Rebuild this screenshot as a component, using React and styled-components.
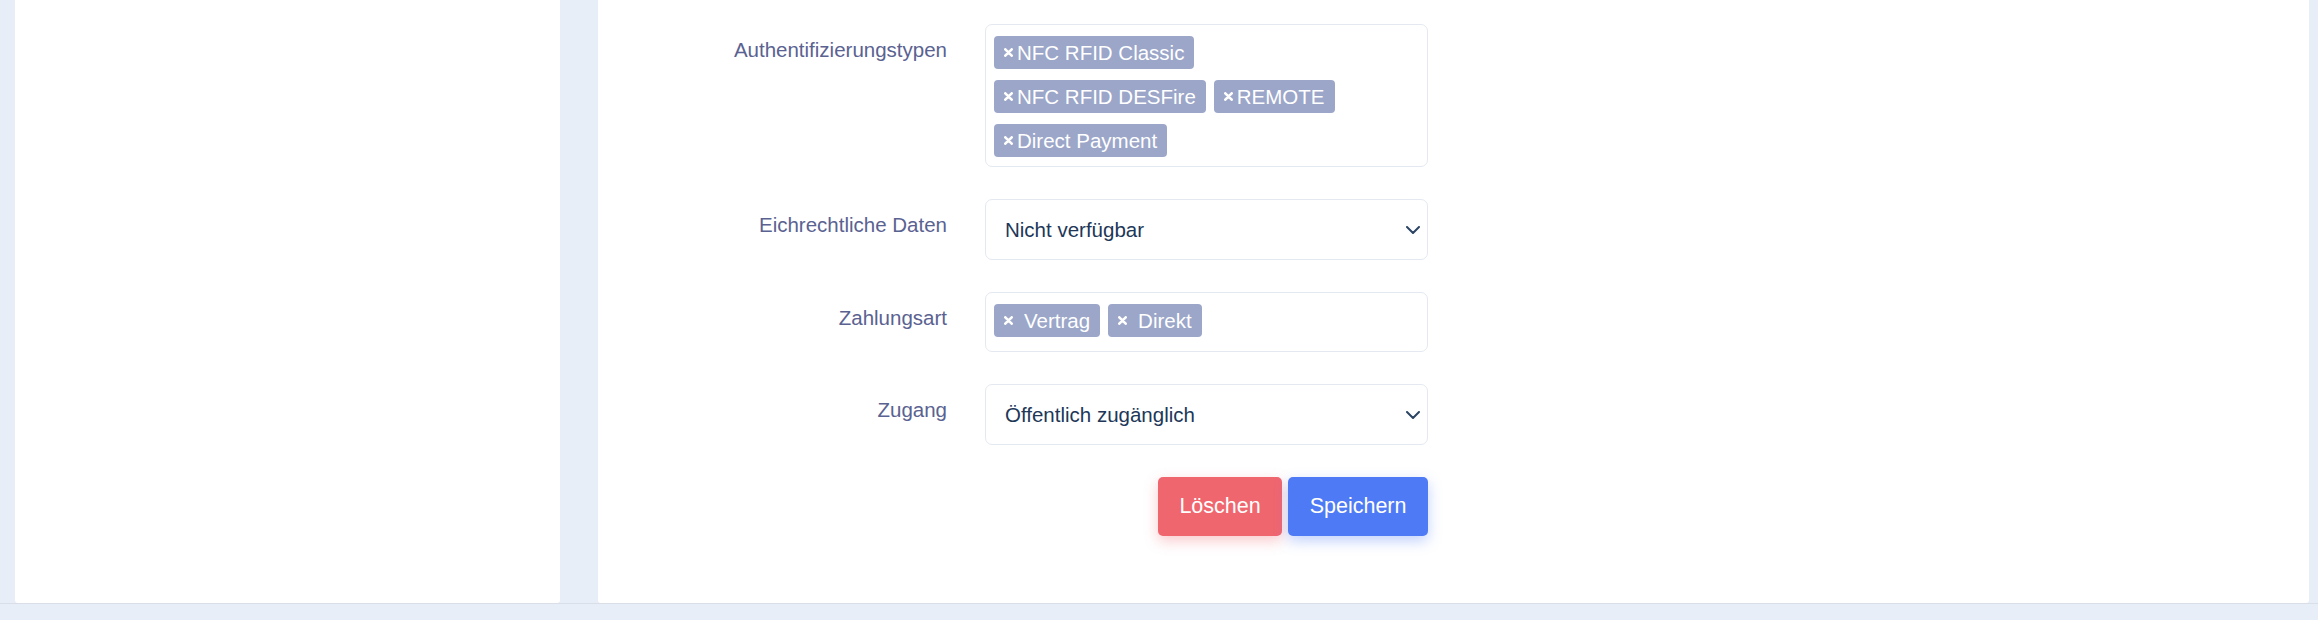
import React from "react";
import styled, { createGlobalStyle } from "styled-components";

const GlobalStyle = createGlobalStyle`
  html, body {
    margin: 0;
    padding: 0;
    background: #e8eef7;
    font-family: "Liberation Sans", Arial, sans-serif;
  }
`;

const Page = styled.div`
  height: 620px;
  display: flex;
  flex-direction: column;
  overflow: hidden;
`;

const Columns = styled.div`
  flex: 0 0 603px;
  display: flex;
  gap: 38px;
  padding: 0 9px 0 15px;
`;

const SidePanel = styled.div`
  width: 545px;
  background: #ffffff;
  border-radius: 0 0 3px 3px;
`;

const MainPanel = styled.div`
  flex: 1;
  background: #ffffff;
  border-radius: 0 0 3px 3px;
`;

const Footer = styled.div`
  flex: 1;
  border-top: 1px solid #d9dee7;
  background: #e8eef7;
`;

const Form = styled.div`
  display: grid;
  grid-template-columns: 349px 443px;
  column-gap: 38px;
  row-gap: 32px;
  padding-top: 24px;
`;

const Label = styled.div`
  text-align: right;
  padding-top: 10px;
  font-size: 20.5px;
  line-height: 31px;
  color: #5a6291;
`;

const TagBox = styled.div`
  box-sizing: border-box;
  min-height: 60px;
  border: 1px solid #e4e9f1;
  border-radius: 7px;
  padding: 11px 40px 9px 8px;
  display: flex;
  flex-wrap: wrap;
  align-content: flex-start;
  gap: 11px 8px;
`;

const Tag = styled.span`
  height: 33px;
  display: inline-flex;
  align-items: center;
  gap: ${(p) => p.$gap}px;
  padding: 0 10px;
  background: #9ba6c9;
  border-radius: 4px;
  color: #ffffff;
  font-size: 20.5px;
  white-space: nowrap;
`;

const Select = styled.div`
  box-sizing: border-box;
  height: 61px;
  border: 1px solid #e4e9f1;
  border-radius: 7px;
  padding: 0 7px 0 19px;
  display: flex;
  align-items: center;
  justify-content: space-between;
  color: #213758;
  font-size: 20.5px;
`;

const Actions = styled.div`
  grid-column: 2;
  display: flex;
  justify-content: flex-end;
  gap: 6px;
`;

const Button = styled.button`
  height: 59px;
  padding: 0 21.5px;
  border: none;
  border-radius: 5px;
  font-family: inherit;
  font-size: 21.5px;
  color: #ffffff;
  background: ${(p) => (p.$variant === "danger" ? "#f0666f" : "#4e7bf5")};
  box-shadow: 0 5px 14px
    ${(p) =>
      p.$variant === "danger"
        ? "rgba(240, 102, 111, 0.35)"
        : "rgba(78, 123, 245, 0.35)"};
`;

const Cross = () => (
  <svg width="9" height="9" viewBox="0 0 9 9">
    <path
      d="M1.3 1.3 L7.7 7.7 M7.7 1.3 L1.3 7.7"
      stroke="#ffffff"
      strokeWidth="2.6"
      strokeLinecap="round"
    />
  </svg>
);

const Chevron = () => (
  <svg width="14" height="8" viewBox="0 0 14 8" fill="none">
    <polyline
      points="1,1 7,7 13,1"
      stroke="#2c4565"
      strokeWidth="2"
      strokeLinecap="round"
      strokeLinejoin="round"
    />
  </svg>
);

const authTypes = [
  "NFC RFID Classic",
  "NFC RFID DESFire",
  "REMOTE",
  "Direct Payment",
];
const paymentTypes = ["Vertrag", "Direkt"];

export default function App() {
  return (
    <Page>
      <GlobalStyle />
      <Columns>
        <SidePanel />
        <MainPanel>
          <Form>
            <Label>Authentifizierungstypen</Label>
            <TagBox>
              {authTypes.map((t) => (
                <Tag key={t} $gap={4}>
                  <Cross />
                  {t}
                </Tag>
              ))}
            </TagBox>

            <Label>Eichrechtliche Daten</Label>
            <Select>
              <span>Nicht verfügbar</span>
              <Chevron />
            </Select>

            <Label>Zahlungsart</Label>
            <TagBox>
              {paymentTypes.map((t) => (
                <Tag key={t} $gap={11}>
                  <Cross />
                  {t}
                </Tag>
              ))}
            </TagBox>

            <Label>Zugang</Label>
            <Select>
              <span>Öffentlich zugänglich</span>
              <Chevron />
            </Select>

            <Actions>
              <Button $variant="danger">Löschen</Button>
              <Button $variant="primary">Speichern</Button>
            </Actions>
          </Form>
        </MainPanel>
      </Columns>
      <Footer />
    </Page>
  );
}
